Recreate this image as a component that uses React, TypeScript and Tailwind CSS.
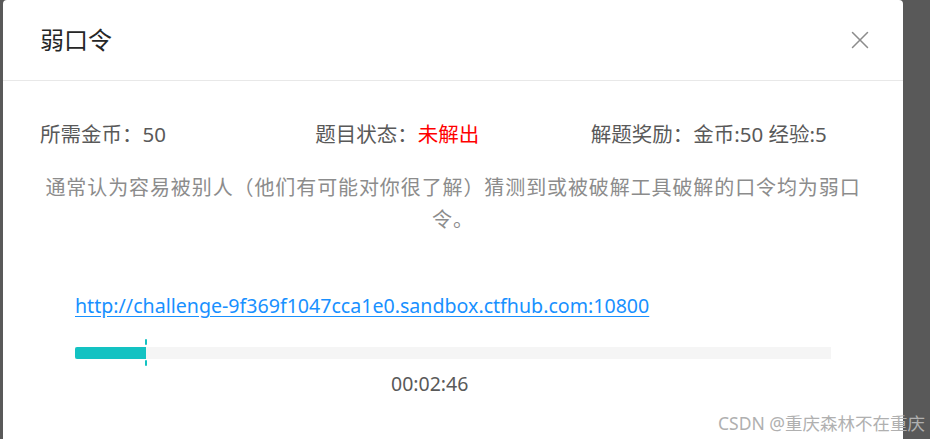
import { X } from 'lucide-react';

const cjk = "font-['Segoe_UI','Noto_Sans','Noto_Sans_CJK_SC',sans-serif]";

/** Modal de défi « 弱口令 » avec lien, barre de temps et watermark. */
export default function App() {
  return (
    <div className={`relative h-[439px] w-[930px] overflow-hidden bg-[#595959] ${cjk}`}>
      <div className="ml-[3px] h-[460px] w-[900px] rounded-t-[4px] bg-white">
        {/* en-tête */}
        <div className="flex h-[81px] items-center justify-between border-b border-[#e8e8e8] pl-[37px] pr-[28px]">
          <span className="text-[24px] text-[#262626]">弱口令</span>
          <X className="h-[30px] w-[30px] text-[#8c8c8c]" strokeWidth={1.2} />
        </div>

        <div className="px-[37px]">
          {/* infos */}
          <div className="mt-[37px] grid h-8 grid-cols-3 text-[20.5px] leading-8 text-[#595959]">
            <span>所需金币：50</span>
            <span>
              题目状态：<span className="text-[#ff0000]">未解出</span>
            </span>
            <span>解题奖励：金币:50 经验:5</span>
          </div>

          <p className="mt-[22px] px-1 text-center text-[20px] leading-8 tracking-[0.9px] text-[#8c8c8c]">
            通常认为容易被别人（他们有可能对你很了解）猜测到或被破解工具破解的口令均为弱口令。
          </p>

          {/* lien + compte à rebours */}
          <div className="px-[35px]">
            <div className="mt-[54px] h-8 text-[19.6px] leading-8">
              <a href="#" className="text-[#1890ff] underline underline-offset-[3px]">
                http://challenge-9f369f1047cca1e0.sandbox.ctfhub.com:10800
              </a>
            </div>
            <div className="relative mt-[25px] h-3 bg-[#f5f5f5]">
              <div className="h-3 w-[71px] rounded-l-[2px] bg-[#13c2c2]" />
              <span className="absolute left-[70px] top-[-8px] h-[6px] w-[2px] rounded-full bg-[#13c2c2]" />
              <span className="absolute left-[70px] top-[13px] h-[6px] w-[2px] rounded-full bg-[#13c2c2]" />
            </div>
            <div className="mt-[9px] pl-[316px] text-[19.5px] leading-8 text-[#595959]">00:02:46</div>
          </div>
        </div>
      </div>

      <span className="absolute bottom-[3px] right-[5px] text-[17.5px] text-[#b0b0b0]">CSDN @重庆森林不在重庆</span>
    </div>
  );
}
